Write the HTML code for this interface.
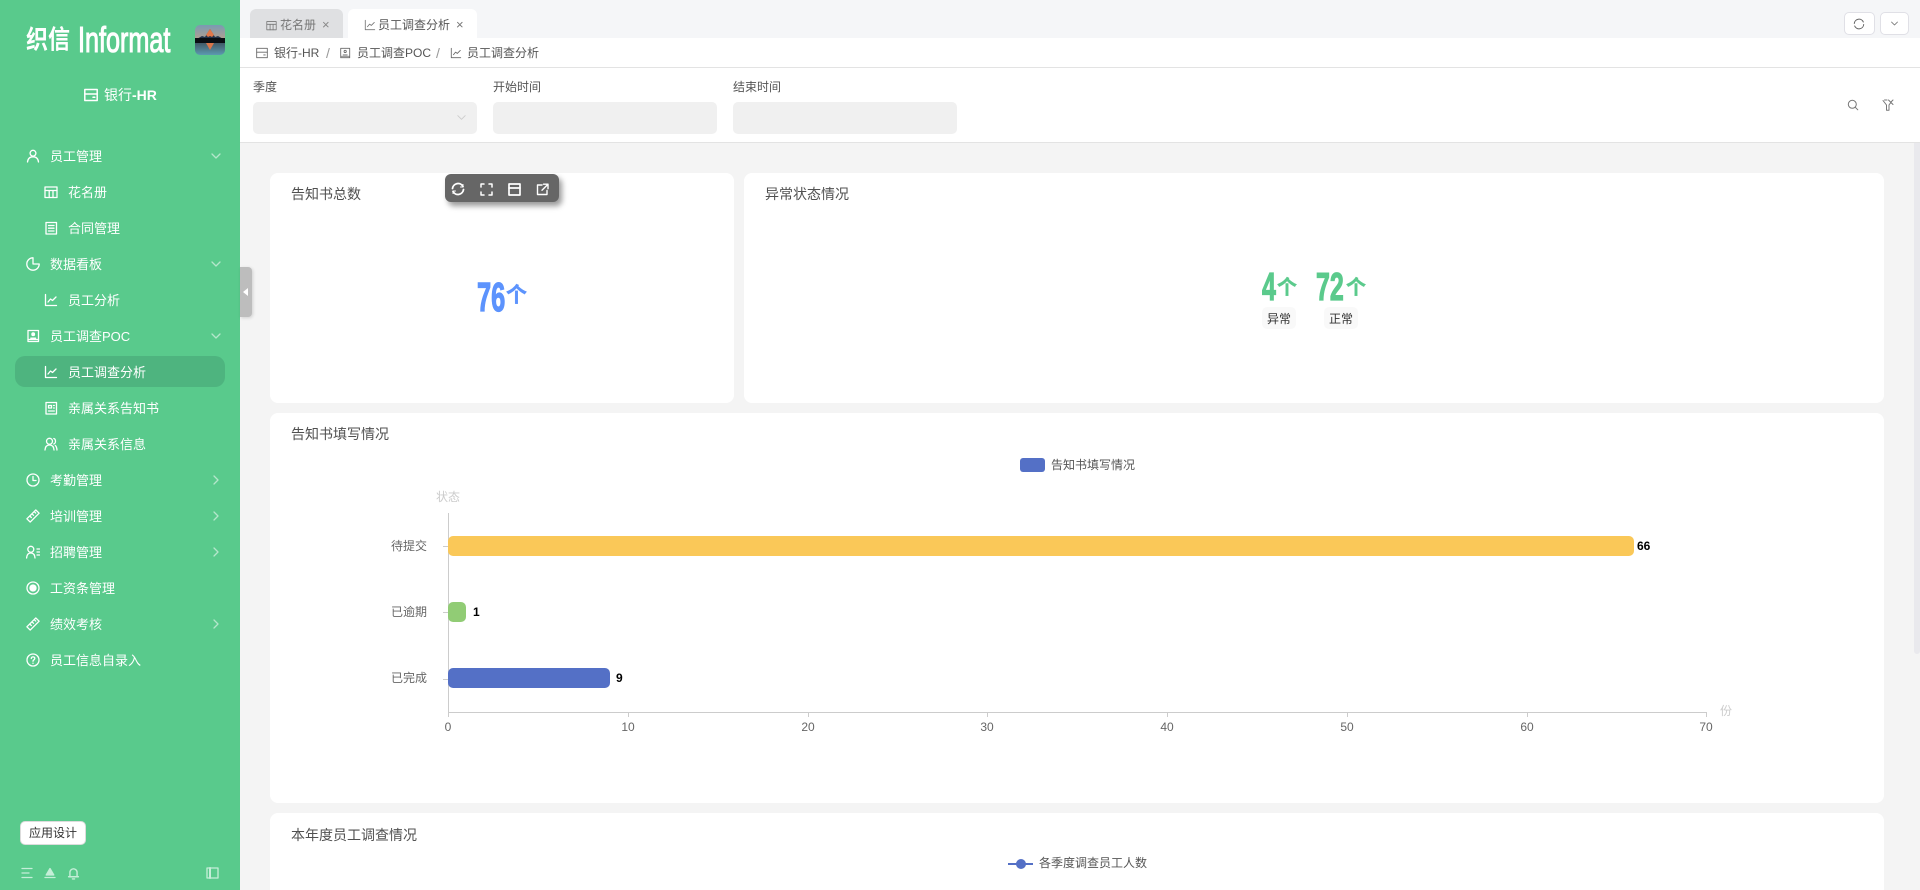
<!DOCTYPE html>
<html lang="zh-CN"><head><meta charset="utf-8"><title>员工调查分析</title>
<style>
*{box-sizing:border-box}
html,body{margin:0;padding:0;width:1920px;height:890px;overflow:hidden;background:#f4f4f4;font-family:"Liberation Sans","Noto Sans CJK SC",sans-serif;font-size:12px;color:#444}
#root{position:relative;width:1920px;height:890px;overflow:hidden;background:#f4f4f4}
.a{position:absolute;white-space:nowrap}
.t{position:absolute;white-space:nowrap;line-height:20px;height:20px}
#side{position:absolute;left:0;top:0;width:240px;height:890px;background:#59ca8c;overflow:hidden}
.m{position:absolute;left:50px;margin-top:1px;font-size:13px;color:#fff;line-height:20px;white-space:nowrap}
.s{left:68px}
svg.i{position:absolute;fill:none;stroke:#fff;stroke-width:1.3;stroke-linecap:round;stroke-linejoin:round}
svg.g{stroke:#666;stroke-width:1}
.card{position:absolute;background:#fff;border-radius:8px}
.title{position:absolute;font-size:14px;line-height:20px;color:#505050;white-space:nowrap}
.inp{position:absolute;top:102px;width:224px;height:32px;background:#f0f0f0;border-radius:5px}
.big{position:absolute;font-weight:700;transform-origin:0 0;line-height:1;white-space:nowrap;-webkit-text-stroke:1.2px currentColor}
.unit{position:absolute;font-weight:700;line-height:1;white-space:nowrap;-webkit-text-stroke:.4px currentColor}
.pill{position:absolute;top:307px;width:34px;height:22px;background:#f9f9f9;border-radius:5px;text-align:center;line-height:24px;font-size:12px;color:#333}
</style></head><body><div id="root">
<svg width="0" height="0" style="position:absolute"><defs>
<symbol id="user" viewBox="0 0 14 14"><circle cx="7" cy="4.200" r="2.900"/><path d="M1.500 13c.4-3.400 2.500-5.200 5.500-5.200s5.100 1.800 5.500 5.200"/></symbol>
<symbol id="table" viewBox="0 0 14 14"><rect x="1" y="2" width="12" height="10.500"/><path d="M1 5.500h12M5.200 5.500v7M9 5.500v7"/></symbol>
<symbol id="doc" viewBox="0 0 14 14"><rect x="2" y="1.500" width="10.500" height="11.500"/><path d="M4.500 4.500h5.500M4.500 7.200h5.500M4.500 10h5.500"/></symbol>
<symbol id="pie" viewBox="0 0 14 14"><path d="M7 .8a6.200 6.200 0 1 0 6.200 6.200H7z"/></symbol>
<symbol id="line" viewBox="0 0 14 14"><path d="M1.500 1.500v11h11M4 9l2.500-3 2 1.500L12 4"/></symbol>
<symbol id="book" viewBox="0 0 14 14"><path d="M2 1.500h10.500v11H2z"/><circle cx="7.200" cy="5.200" r="1.300" fill="#fff"/><path d="M4.800 9.200h4.800M2 10.500h10.500"/></symbol>
<symbol id="news" viewBox="0 0 14 14"><rect x="2" y="1.500" width="10.500" height="11.500"/><path d="M4.500 4.500h3v2.500h-3zM9.500 4.500h.8M9.500 7h.8M4.500 10h5.800"/></symbol>
<symbol id="users" viewBox="0 0 14 14"><circle cx="5.500" cy="4.300" r="3"/><path d="M1 13c.2-3.200 1.900-5 4.500-5s4.300 1.800 4.500 5M9.800 1.500c2 .5 2.500 4.500 0 5.500M11.300 8.500c1 .8 1.500 2.500 1.700 4.500"/></symbol>
<symbol id="clock" viewBox="0 0 14 14"><circle cx="7" cy="7" r="6"/><path d="M7 3.500V7.500h3"/></symbol>
<symbol id="ruler" viewBox="0 0 14 14"><path d="M.9 9.800 9.800.9l3.300 3.300-8.900 8.900zM3.800 7l1.500 1.500M6 4.800l1.500 1.500M8.200 2.600l1.500 1.500"/></symbol>
<symbol id="ulist" viewBox="0 0 14 14"><circle cx="4.800" cy="4.300" r="3"/><path d="M.6 13c.2-3.200 1.800-5 4.200-5s4 1.800 4.200 5M11 4h2.500M11 7h2.500M11 10h2.500"/></symbol>
<symbol id="rec" viewBox="0 0 14 14"><circle cx="7" cy="7" r="6"/><circle cx="7" cy="7" r="3" fill="#fff"/></symbol>
<symbol id="help" viewBox="0 0 14 14"><circle cx="7" cy="7" r="6"/><path d="M5.300 5.500c0-2.200 3.500-2.200 3.500 0 0 1.300-1.800 1.300-1.800 2.700M7 10.200v.2"/></symbol>
<symbol id="app" viewBox="0 0 14 14"><rect x=".8" y="1.500" width="12.400" height="11"/><path d="M.8 6h12.400M9 9.300h1.800"/></symbol>
<symbol id="down" viewBox="0 0 12 12"><path d="M2 4l4 4 4-4"/></symbol>
<symbol id="right" viewBox="0 0 12 12"><path d="M4 2l4 4-4 4"/></symbol>
</defs></svg>

<!-- TOP BARS -->
<div class="a" style="left:240px;top:0;width:1680px;height:38px;background:#f5f6f8"></div>
<div class="a" style="left:250px;top:9px;width:93px;height:29px;background:#dfe0e2;border-radius:6px 6px 0 0"></div>
<div class="a" style="left:348px;top:9px;width:129px;height:29px;background:#fff;border-radius:6px 6px 0 0"></div>
<svg class="i g" style="left:266px;top:20px;stroke:#777" width="11" height="11"><use href="#table"/></svg>
<div class="t" style="left:280px;top:15px;color:#777">花名册</div>
<div class="t" style="left:322px;top:15px;color:#888;font-size:13px">×</div>
<svg class="i g" style="left:364px;top:19px;stroke:#777" width="12" height="12"><use href="#line"/></svg>
<div class="t" style="left:378px;top:15px;color:#555">员工调查分析</div>
<div class="t" style="left:456px;top:15px;color:#777;font-size:13px">×</div>
<div class="a" style="left:1844px;top:12px;width:31px;height:23px;background:#fff;border:1px solid #e0e0e6;border-radius:5px"></div>
<div class="a" style="left:1880px;top:12px;width:29px;height:23px;background:#fff;border:1px solid #e0e0e6;border-radius:5px"></div>
<svg class="i g" style="left:1853px;top:18px" width="12" height="12" viewBox="0 0 12 12"><path d="M1.300 5.500A4.700 4.700 0 0 1 10.300 4M10.700 6.500A4.700 4.700 0 0 1 1.700 8"/></svg>
<svg class="i g" style="left:1890px;top:19px" width="9" height="9"><use href="#down"/></svg>

<div class="a" style="left:240px;top:38px;width:1680px;height:105px;background:#fff;border-bottom:1px solid #e3e3e3"></div>
<div class="a" style="left:240px;top:67px;width:1680px;height:1px;background:#e3e3e3"></div>
<svg class="i g" style="left:256px;top:47px" width="12" height="12"><use href="#app"/></svg>
<div class="t" style="left:274px;top:43px;color:#555">银行-HR</div>
<div class="t" style="left:326px;top:43px;color:#999;font-size:14px">/</div>
<svg class="i g" style="left:339px;top:47px" width="12" height="12" viewBox="0 0 14 14"><path d="M2 1.500h10.500v11H2zM4.800 9.200h4.800M2 10.800h10.500"/><circle cx="7.200" cy="5.200" r="1.300"/></svg>
<div class="t" style="left:357px;top:43px;color:#555">员工调查POC</div>
<div class="t" style="left:436px;top:43px;color:#999;font-size:14px">/</div>
<svg class="i g" style="left:450px;top:47px" width="12" height="12"><use href="#line"/></svg>
<div class="t" style="left:467px;top:43px;color:#555">员工调查分析</div>

<div class="t" style="left:253px;top:77px;color:#555">季度</div>
<div class="t" style="left:493px;top:77px;color:#555">开始时间</div>
<div class="t" style="left:733px;top:77px;color:#555">结束时间</div>
<div class="inp" style="left:253px"></div><div class="inp" style="left:493px"></div><div class="inp" style="left:733px"></div>
<svg class="i" style="left:456px;top:112px;stroke:#ccc;stroke-width:1" width="11" height="11"><use href="#down"/></svg>
<svg class="i g" style="left:1847px;top:99px;stroke:#777" width="12" height="12" viewBox="0 0 12 12"><circle cx="5.300" cy="5.300" r="4"/><path d="M8.300 8.300 10.800 10.800"/></svg>
<svg class="i g" style="left:1882px;top:99px;stroke:#777" width="12" height="12" viewBox="0 0 12 12"><path d="M1 1.500l3.500 4.500v5.300h2.500V6l1.800-2.500M6.500 1l4.500 4.500M11 1 9 3M2.500 1H5"/></svg>

<!-- SCROLLBAR -->
<div class="a" style="left:1914px;top:143px;width:6px;height:511px;background:#e9e9ed;border-radius:0 0 3px 3px"></div>

<!-- CARDS -->
<div class="card" style="left:270px;top:173px;width:464px;height:230px"></div>
<div class="card" style="left:744px;top:173px;width:1140px;height:230px"></div>
<div class="card" style="left:270px;top:413px;width:1614px;height:390px"></div>
<div class="card" style="left:270px;top:813px;width:1614px;height:77px;border-radius:8px 8px 0 0"></div>
<div class="title" style="left:291px;top:184px">告知书总数</div>
<div class="title" style="left:765px;top:184px">异常状态情况</div>
<div class="title" style="left:291px;top:424px">告知书填写情况</div>
<div class="title" style="left:291px;top:825px">本年度员工调查情况</div>

<!-- Toolbar -->
<div class="a" style="left:445px;top:174px;width:114px;height:28px;background:#666;border-radius:6px;box-shadow:3px 4px 6px rgba(0,0,0,.4)"></div>
<svg class="i" style="left:451px;top:182px;stroke-width:1.800" width="14" height="14" viewBox="0 0 14 14"><path d="M1.500 6.500A5.600 5.600 0 0 1 12 4.500M12.500 7.500A5.600 5.600 0 0 1 2 9.500"/><path d="M12 2.500v2.500H9.500M2 11.500V9h2.500" stroke-width="1"/></svg>
<svg class="i" style="left:480px;top:183px;stroke-width:1.500" width="13" height="13" viewBox="0 0 13 13"><path d="M1 4V1h3M9 1h3v3M12 9v3H9M4 12H1V9"/></svg>
<svg class="i" style="left:508px;top:183px;stroke-width:1.700" width="13" height="13" viewBox="0 0 13 13"><rect x="1" y="1" width="11" height="11"/><path d="M1 5h11"/></svg>
<svg class="i" style="left:536px;top:183px;stroke-width:1.400" width="13" height="13" viewBox="0 0 13 13"><path d="M6 2H1.500v9.500H11V7.500M7.500 1.200H12V5.700M12 1.200 6 7.200"/></svg>

<!-- Numbers -->
<div class="big" style="left:477px;top:277px;font-size:41px;color:#5c93fd;transform:scaleX(.62)">76</div>
<div class="unit" style="left:506px;top:285px;font-size:21px;color:#5c93fd">个</div>
<div class="big" style="left:1262px;top:268px;font-size:39px;color:#5bca8c;transform:scaleX(.64)">4</div>
<div class="unit" style="left:1277px;top:278px;font-size:20px;color:#5bca8c">个</div>
<div class="big" style="left:1316px;top:268px;font-size:39px;color:#5bca8c;transform:scaleX(.64)">72</div>
<div class="unit" style="left:1346px;top:278px;font-size:20px;color:#5bca8c">个</div>
<div class="pill" style="left:1262px">异常</div>
<div class="pill" style="left:1324px">正常</div>

<!-- CHART -->
<svg class="a" style="left:0;top:0" width="1920" height="890" font-family="Liberation Sans,Noto Sans CJK SC,sans-serif" font-size="12">
<rect x="1020" y="458" width="25" height="14" rx="3" fill="#5470c6"/>
<text x="1051" y="469" fill="#555">告知书填写情况</text>
<text x="448" y="501" fill="#ccc" text-anchor="middle">状态</text>
<path d="M448.500 513V712.500M448 712.500H1707M443 546.500h5M443 612.500h5M443 679.500h5M448.500 712v5M628.500 712v5M808.500 712v5M987.500 712v5M1167.500 712v5M1347.500 712v5M1527.500 712v5M1706.500 712v5" stroke="#ccc" fill="none"/>
<g fill="#666" text-anchor="end"><text x="427" y="550">待提交</text><text x="427" y="616">已逾期</text><text x="427" y="682">已完成</text></g>
<rect x="448" y="536" width="1186" height="20" rx="5" fill="#fac858"/>
<rect x="448" y="602" width="18" height="20" rx="5" fill="#91cc75"/>
<rect x="448" y="668" width="162" height="20" rx="5" fill="#5470c6"/>
<g font-weight="700" fill="#000"><text x="1637" y="550">66</text><text x="473" y="616">1</text><text x="616" y="682">9</text></g>
<g fill="#666" text-anchor="middle"><text x="448" y="731">0</text><text x="628" y="731">10</text><text x="808" y="731">20</text><text x="987" y="731">30</text><text x="1167" y="731">40</text><text x="1347" y="731">50</text><text x="1527" y="731">60</text><text x="1706" y="731">70</text></g>
<text x="1720" y="715" fill="#ccc">份</text>
<path d="M1008 864h25" stroke="#5470c6" stroke-width="2"/><circle cx="1021" cy="864" r="5" fill="#5470c6"/>
<text x="1039" y="867" fill="#555">各季度调查员工人数</text>
</svg>

<!-- SIDEBAR -->
<div id="side">
<div class="a" style="left:26px;top:24px;font-size:22px;line-height:32px;color:#fff;font-weight:700;transform:scaleY(1.200);transform-origin:0 50%">织信</div>
<div class="a" style="left:78px;top:20px;font-size:36px;line-height:40px;color:#fff;transform:scaleX(.7);transform-origin:0 0;-webkit-text-stroke:1.100px #fff">Informat</div>
<svg class="a" style="left:195px;top:25px;border-radius:5px" width="30" height="30" viewBox="0 0 30 30"><defs><linearGradient id="sk" x1="0" y1="0" x2="0" y2="1"><stop offset="0" stop-color="#7a9ab2"/><stop offset="1" stop-color="#b3a08e"/></linearGradient><linearGradient id="wt" x1="0" y1="0" x2="0" y2="1"><stop offset="0" stop-color="#3a4a55"/><stop offset="1" stop-color="#5c9ab0"/></linearGradient></defs><rect width="30" height="15" fill="url(#sk)"/><rect y="15" width="30" height="15" fill="url(#wt)"/><path d="M0 15 7 11l3 1 5-8 5 8 3-1 7 4z" fill="#23344a"/><path d="M11 10 15 4l4 6-2 2-2-1-2 1z" fill="#e0784a"/><rect y="13" width="30" height="5" fill="#090f13"/><path d="M11 18h8l-4 7z" fill="#d8764a"/></svg>
<svg class="i" style="left:84px;top:88px;stroke-width:1.500" width="14" height="14"><use href="#app"/></svg>
<div class="a" style="left:104px;top:85px;font-size:14px;line-height:20px;color:#fff">银行<b>-HR</b></div>

<div class="a" style="left:15px;top:356px;width:210px;height:31px;background:#4eb47f;border-radius:10px"></div>

<svg class="i" style="left:26px;top:149px" width="14" height="14"><use href="#user"/></svg><div class="m" style="top:146px">员工管理</div>
<svg class="i" style="left:44px;top:185px" width="14" height="14"><use href="#table"/></svg><div class="m s" style="top:182px">花名册</div>
<svg class="i" style="left:44px;top:221px" width="14" height="14"><use href="#doc"/></svg><div class="m s" style="top:218px">合同管理</div>
<svg class="i" style="left:26px;top:257px" width="14" height="14"><use href="#pie"/></svg><div class="m" style="top:254px">数据看板</div>
<svg class="i" style="left:44px;top:293px" width="14" height="14"><use href="#line"/></svg><div class="m s" style="top:290px">员工分析</div>
<svg class="i" style="left:26px;top:329px" width="14" height="14"><use href="#book"/></svg><div class="m" style="top:326px">员工调查POC</div>
<svg class="i" style="left:44px;top:365px" width="14" height="14"><use href="#line"/></svg><div class="m s" style="top:362px">员工调查分析</div>
<svg class="i" style="left:44px;top:401px" width="14" height="14"><use href="#news"/></svg><div class="m s" style="top:398px">亲属关系告知书</div>
<svg class="i" style="left:44px;top:437px" width="14" height="14"><use href="#users"/></svg><div class="m s" style="top:434px">亲属关系信息</div>
<svg class="i" style="left:26px;top:473px" width="14" height="14"><use href="#clock"/></svg><div class="m" style="top:470px">考勤管理</div>
<svg class="i" style="left:26px;top:509px" width="14" height="14"><use href="#ruler"/></svg><div class="m" style="top:506px">培训管理</div>
<svg class="i" style="left:26px;top:545px" width="14" height="14"><use href="#ulist"/></svg><div class="m" style="top:542px">招聘管理</div>
<svg class="i" style="left:26px;top:581px" width="14" height="14"><use href="#rec"/></svg><div class="m" style="top:578px">工资条管理</div>
<svg class="i" style="left:26px;top:617px" width="14" height="14"><use href="#ruler"/></svg><div class="m" style="top:614px">绩效考核</div>
<svg class="i" style="left:26px;top:653px" width="14" height="14"><use href="#help"/></svg><div class="m" style="top:650px">员工信息自录入</div>

<svg class="i" style="left:210px;top:150px;stroke:#b5e6cb" width="12" height="12"><use href="#down"/></svg>
<svg class="i" style="left:210px;top:258px;stroke:#b5e6cb" width="12" height="12"><use href="#down"/></svg>
<svg class="i" style="left:210px;top:330px;stroke:#b5e6cb" width="12" height="12"><use href="#down"/></svg>
<svg class="i" style="left:210px;top:474px;stroke:#b5e6cb" width="12" height="12"><use href="#right"/></svg>
<svg class="i" style="left:210px;top:510px;stroke:#b5e6cb" width="12" height="12"><use href="#right"/></svg>
<svg class="i" style="left:210px;top:546px;stroke:#b5e6cb" width="12" height="12"><use href="#right"/></svg>
<svg class="i" style="left:210px;top:618px;stroke:#b5e6cb" width="12" height="12"><use href="#right"/></svg>

<div class="a" style="left:20px;top:821px;width:66px;height:24px;background:#fff;border:1px solid #dcdcdc;border-radius:5px;text-align:center;line-height:22px;font-size:12px;color:#333">应用设计</div>
<svg class="i" style="left:21px;top:867px;stroke:#c5eed8" width="12" height="12" viewBox="0 0 12 12"><path d="M1 1.500h10M1 6h7M1 10.500h10"/></svg>
<svg class="i" style="left:44px;top:867px;stroke:#c5eed8" width="12" height="12" viewBox="0 0 12 12"><path d="M6 1.500 9.800 8H2.200z" fill="#c5eed8"/><path d="M1 10.500h10"/></svg>
<svg class="i" style="left:67px;top:867px;stroke:#c5eed8" width="13" height="13" viewBox="0 0 12 12"><path d="M1.500 9h9M2.700 9V5a3.300 3.300 0 0 1 6.600 0v4M5 11h2"/></svg>
<svg class="i" style="left:206px;top:867px;stroke:#c5eed8" width="13" height="12" viewBox="0 0 13 12"><rect x="1" y="1" width="11" height="10"/><path d="M4 1v10" stroke-width="2"/></svg>
</div>

<!-- Collapse handle -->
<div class="a" style="left:240px;top:267px;width:12px;height:50px;background:#bdbdbd;border-radius:0 4px 4px 0;box-shadow:1px 1px 3px rgba(0,0,0,.15)"></div>
<div class="a" style="left:243px;top:288px;width:0;height:0;border-style:solid;border-width:4px 5px 4px 0;border-color:transparent #fff transparent transparent"></div>
</div></body></html>
